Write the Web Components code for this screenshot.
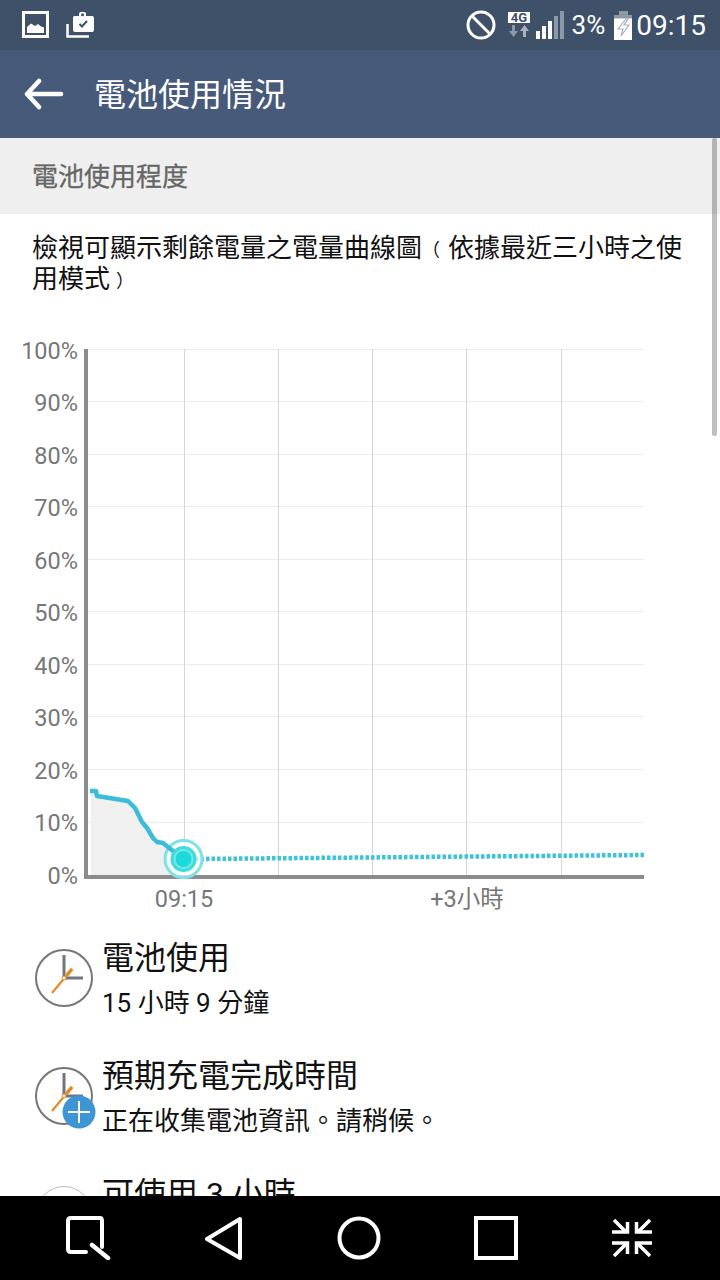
<!DOCTYPE html>
<html lang="zh-Hant">
<head>
<meta charset="utf-8">
<title>電池使用情況</title>
<style>
  html, body { margin: 0; padding: 0; background: #fff; }
  body {
    width: 720px;
    height: 1280px;
    overflow: hidden;
    display: flex;
    flex-direction: column;
    font-family: Roboto, "Noto Sans CJK TC", sans-serif;
  }
  /* the reference draws these full-width brackets small, in the middle of their cell */
  .paren { font-size: 18px; line-height: 1; vertical-align: 1px; }
  .paren.open { margin-right: 8px; }
  .paren.close { margin-left: 6px; }
</style>
</head>
<body>
<status-bar></status-bar>
<app-bar title="電池使用情況"></app-bar>
<scroll-view>
  <section-header>電池使用程度</section-header>
  <intro-text>檢視可顯示剩餘電量之電量曲線圖<span class="paren open">（</span>依據最近三小時之使用模式<span class="paren close">）</span></intro-text>
  <battery-chart></battery-chart>
  <usage-row icon="clock" heading="電池使用">15 小時 9 分鐘</usage-row>
  <usage-row icon="clock-plus" heading="預期充電完成時間">正在收集電池資訊。請稍候。</usage-row>
  <usage-row icon="plain" heading="可使用 3 小時"></usage-row>
</scroll-view>
<nav-bar></nav-bar>

<script>
const FONT = 'Roboto, "Noto Sans CJK TC", sans-serif';

class StatusBar extends HTMLElement {
  constructor() {
    super();
    const root = this.attachShadow({ mode: "open" });
    root.innerHTML = `
    <style>
      :host {
        display: flex;
        align-items: center;
        justify-content: space-between;
        flex: none;
        height: 50px;
        padding: 0 14px 0 22px;
        box-sizing: border-box;
        background: #3f5069;
        color: #fff;
        font-family: ${FONT};
      }
      .side { display: flex; align-items: center; }
      .left { gap: 16px; }
      svg { display: block; }
      .pct { font-size: 26px; margin: 0 9px 0 8px; }
      .time { font-size: 28px; margin-left: 4px; }
      .net { margin: 0 6px 0 12px; }
      .badge { font: 700 13px Roboto, sans-serif; fill: #3f5069; }
    </style>
    <div class="side left">
      <svg width="28" height="28" viewBox="0 0 28 28">
        <rect x="1.5" y="1.5" width="24" height="24" fill="none" stroke="#fff" stroke-width="3"/>
        <path d="M5 22v-6l4-3.5 4 2.5 3-2 3 2.5 3 1V22z" fill="#fff"/>
      </svg>
      <svg width="30" height="28" viewBox="0 0 30 28">
        <path d="M1.5 13v12.5H23" fill="none" stroke="#fff" stroke-width="2.5"/>
        <path d="M7 6.500q0-1.500 1.500-1.500H13V3q0-2 2-2h3q2 0 2 2v2h6q2 0 2 2v12q0 2-2 2H9q-2 0-2-2z" fill="#fff"/>
        <circle cx="16.500" cy="3.800" r="1.500" fill="#3f5069"/>
        <path d="M13.500 13l2.500 2.500 5-5.500" fill="none" stroke="#3f5069" stroke-width="2"/>
      </svg>
    </div>
    <div class="side">
      <svg width="30" height="30" viewBox="0 0 30 30">
        <circle cx="15" cy="15" r="13" fill="none" stroke="#fff" stroke-width="3"/>
        <path d="M6 6l18 18" stroke="#fff" stroke-width="3"/>
      </svg>
      <svg class="net" width="22" height="28" viewBox="0 0 22 28">
        <rect x="0" y="1" width="22" height="11" fill="#fff"/>
        <text class="badge" x="11" y="11" text-anchor="middle">4G</text>
        <path d="M4 14h3v6h3l-4.500 6L1 20h3z" fill="#8c97a8"/>
        <path d="M15 26h3v-6h3l-4.500-6L12 20h3z" fill="#aab2bf"/>
      </svg>
      <svg width="28" height="30" viewBox="0 0 28 30">
        <rect x="0" y="21" width="4" height="8" fill="#fff"/>
        <rect x="6" y="16" width="4" height="13" fill="#fff"/>
        <rect x="12" y="11" width="4" height="18" fill="#fff"/>
        <rect x="18" y="6" width="4" height="23" fill="#8c97a8"/>
        <rect x="24" y="1" width="4" height="28" fill="#8c97a8"/>
      </svg>
      <span class="pct">3%</span>
      <svg width="18" height="29" viewBox="0 0 18 29">
        <rect x="5" y="0" width="9" height="4" fill="#8c97a8"/>
        <rect x="0" y="4" width="18" height="4" fill="#8c97a8"/>
        <rect x="0" y="7.500" width="18" height="21.500" fill="#fff"/>
        <path d="M12 8L4 18h5L7 25l8-11h-5l4-6z" fill="none" stroke="#aab0ba" stroke-width="1.200"/>
      </svg>
      <span class="time">09:15</span>
    </div>
  `;
  }
}

class AppBar extends HTMLElement {
  constructor() {
    super();
    const root = this.attachShadow({ mode: "open" });
    root.innerHTML = `
    <style>
      :host {
        display: flex;
        align-items: center;
        flex: none;
        height: 88px;
        padding-left: 24px;
        box-sizing: border-box;
        background: #475a7a;
        color: #fff;
        font: 32px ${FONT};
      }
      svg { display: block; margin-right: 30px; }
      span { margin-bottom: 4px; }
    </style>
    <svg width="40" height="32" viewBox="0 0 40 32">
      <path d="M15 3L3 16l12 13M3 16h34" fill="none" stroke="#fff" stroke-width="4.500" stroke-linecap="round" stroke-linejoin="round"/>
    </svg>
    <span id="title"></span>
  `;
    root.getElementById("title").textContent = this.getAttribute("title");
  }
}

class ScrollView extends HTMLElement {
  constructor() {
    super();
    const root = this.attachShadow({ mode: "open" });
    root.innerHTML = `
    <style>
      :host {
        display: block;
        position: relative;
        flex: 1;
        min-height: 0;
        overflow: hidden;
        background: #fff;
      }
      .thumb {
        position: absolute;
        top: 0;
        right: 3px;
        width: 5px;
        height: 298px;
        border-radius: 2px;
        background: rgba(0, 0, 0, 0.25);
      }
    </style>
    <slot></slot>
    <div class="thumb"></div>
  `;
  }
}

class SectionHeader extends HTMLElement {
  constructor() {
    super();
    const root = this.attachShadow({ mode: "open" });
    root.innerHTML = `
    <style>
      :host {
        display: flex;
        align-items: center;
        box-sizing: border-box;
        height: 76px;
        padding: 0 0 4px 32px;
        background: #efefef;
        color: #666;
        font: 26px ${FONT};
        -webkit-text-stroke: 0.3px #666;
      }
    </style>
    <slot></slot>
  `;
  }
}

class IntroText extends HTMLElement {
  constructor() {
    super();
    const root = this.attachShadow({ mode: "open" });
    root.innerHTML = `
    <style>
      :host {
        display: block;
        box-sizing: border-box;
        height: 116px;
        padding: 19px 32px 0;
        color: #111;
        font: 26px/31px ${FONT};
      }
    </style>
    <slot></slot>
  `;
  }
}

class BatteryChart extends HTMLElement {
  constructor() {
    super();
    const root = this.attachShadow({ mode: "open" });
    const gridY = [349, 401, 454, 506, 559, 611, 664, 716, 769, 822];
    const labelY = [875, 822, 770, 717, 665, 612, 560, 507, 455, 402, 350];
    const h = gridY.map(y => `<line x1="88" x2="644" y1="${y + 0.5}" y2="${y + 0.5}" stroke="#ececec"/>`).join("");
    const v = [184, 278, 372, 466, 561].map(x => `<line x1="${x + 0.5}" x2="${x + 0.5}" y1="349" y2="875" stroke="#d6d6d6"/>`).join("");
    const labels = labelY.map((y, i) => `<text x="78" y="${y + 9}" text-anchor="end">${i * 10}%</text>`).join("");
    root.innerHTML = `
    <style>
      :host { display: block; height: 589px; }
      svg { display: block; }
      text { font: 23.500px ${FONT}; fill: #777; }
    </style>
    <svg width="720" height="589" viewBox="0 330 720 589">
      ${h}${v}
      <path d="M91 791h5l1 5 31 5 7 7 7 14 5 6 6 10 4 4 6 1 20 16v16H91z" fill="#f0f0f0"/>
      <path d="M195 859L644 855" fill="none" stroke="#3dc4d8" stroke-width="4.500" stroke-dasharray="3.500 2"/>
      <path d="M86 349V877H644" fill="none" stroke="#8c8c8c" stroke-width="4"/>
      <circle cx="183.500" cy="859" r="18.500" fill="#fff" fill-opacity="0.7" stroke="#7fe3e3" stroke-width="3"/>
      <path d="M90 791h6l1 5 31 5 7 7 7 14 5 6 6 10 4 4 6 1 20 16" fill="none" stroke="#3dbcd8" stroke-width="4.500" stroke-linejoin="round"/>
      <circle cx="183.500" cy="859" r="13" fill="#3fdcdc"/>
      <circle cx="183.500" cy="859" r="10" fill="#fff" fill-opacity="0.3"/>
      <circle cx="183.500" cy="859" r="8" fill="#1adada"/>
      ${labels}
      <text x="184" y="907" text-anchor="middle">09:15</text>
      <text x="467" y="907" text-anchor="middle">+3小時</text>
    </svg>
  `;
  }
}

class UsageRow extends HTMLElement {
  constructor() {
    super();
    const root = this.attachShadow({ mode: "open" });
    const kind = this.getAttribute("icon");
    const hands = `
      <path d="M30 7v23h19" fill="none" stroke="#6f7680" stroke-width="3"/>
      <path d="M18 45L38 21" stroke="#e8861e" stroke-width="2"/>
      <path d="M33 27l5-6" stroke="#e8861e" stroke-width="3.500"/>
      <circle cx="30" cy="30" r="2" fill="#fff" stroke="#e8861e"/>`;
    const plus = `
      <circle cx="45" cy="46" r="16.500" fill="#3d95d3"/>
      <path d="M45 35v22M34 46h22" stroke="#fff" stroke-width="2"/>`;
    const icon = kind === "plain"
      ? `<circle cx="30" cy="30" r="27.500" fill="none" stroke="#bbb" stroke-width="1"/>`
      : `<circle cx="30" cy="30" r="28" fill="#fff" stroke="#777" stroke-width="2"/>${hands}${kind === "clock-plus" ? plus : ""}`;
    root.innerHTML = `
    <style>
      :host {
        display: flex;
        height: 118px;
        box-sizing: border-box;
        padding: 24px 0 0 34px;
        gap: 8px;
        color: #111;
        font-family: ${FONT};
      }
      svg { flex: none; display: block; margin-top: 5px; overflow: visible; }
      .text { margin-top: -7px; }
      .heading { font-size: 32px; line-height: 44px; }
      .sub { font-size: 26px; line-height: 44px; margin-top: 1px; }
    </style>
    <svg width="60" height="60" viewBox="0 0 60 60">${icon}</svg>
    <div class="text">
      <div class="heading" id="heading"></div>
      <div class="sub"><slot></slot></div>
    </div>
  `;
    root.getElementById("heading").textContent = this.getAttribute("heading");
  }
}

class NavBar extends HTMLElement {
  constructor() {
    super();
    const root = this.attachShadow({ mode: "open" });
    root.innerHTML = `
    <style>
      :host {
        display: flex;
        align-items: center;
        justify-content: space-between;
        flex: none;
        height: 84px;
        padding: 0 67px 0 65px;
        box-sizing: border-box;
        background: #000;
      }
      svg { display: block; fill: none; stroke: #fff; stroke-width: 4; }
      .shrink { stroke-width: 3.500; }
    </style>
    <svg width="46" height="44" viewBox="0 0 46 44" stroke-linecap="round">
      <path d="M21 36H6q-3 0-3-3V5q0-3 3-3h29q2 0 2 3v26"/>
      <path d="M27 29l16 13" stroke-width="4.500"/>
    </svg>
    <svg width="40" height="44" viewBox="0 0 40 44" stroke-linejoin="round">
      <path d="M36 3L3 23l33 19z"/>
    </svg>
    <svg width="44" height="44" viewBox="0 0 44 44"><circle cx="22" cy="22" r="19.500"/></svg>
    <svg width="44" height="44" viewBox="0 0 44 44"><rect x="2" y="2" width="40" height="40"/></svg>
    <svg class="shrink" width="42" height="42" viewBox="0 0 42 42">
      <path d="M3 3l12 12M1 15h15.500V5"/>
      <path d="M39 3L27 15M41 15H25.500V5"/>
      <path d="M3 39l12-12M1 26h15.500v11"/>
      <path d="M39 39L27 27M41 26H25.500v11"/>
    </svg>
  `;
  }
}

customElements.define("status-bar", StatusBar);
customElements.define("app-bar", AppBar);
customElements.define("scroll-view", ScrollView);
customElements.define("section-header", SectionHeader);
customElements.define("intro-text", IntroText);
customElements.define("battery-chart", BatteryChart);
customElements.define("usage-row", UsageRow);
customElements.define("nav-bar", NavBar);
</script>
</body>
</html>
